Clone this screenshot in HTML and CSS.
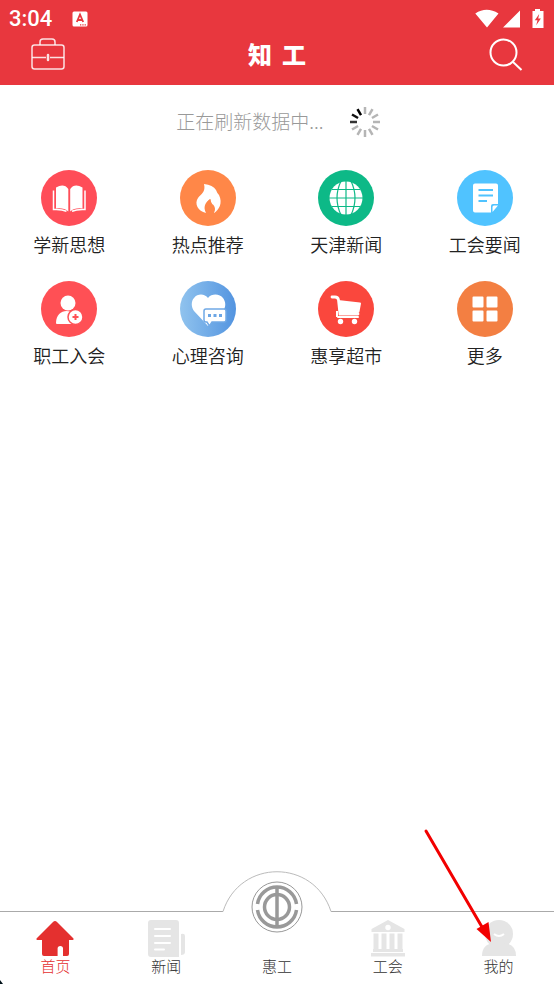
FILE: index.html
```html
<!DOCTYPE html>
<html lang="zh-CN">
<head>
<meta charset="utf-8">
<meta name="viewport" content="width=device-width, initial-scale=1">
<title>知工</title>
<link rel="stylesheet" href="styles.css">
</head>
<body>
<header class="header">
  <div class="status">
    <time class="clock">3:04</time>
    <svg class="notice" width="16" height="16" viewBox="0 0 16 16" aria-hidden="true"><rect x=".5" y=".5" width="15" height="15" rx="1.5" fill="#fff"/><path d="M4.800 11 8 3.500l3.200 7.500M6 9h4" fill="none" stroke="#e8373e" stroke-width="1.800"/><path d="M8 13.800h1.300m1 0h1.300m1 0h1.300" stroke="#e8373e" stroke-width="1.200"/></svg>
    <svg class="signals" width="70" height="20" viewBox="0 0 70 20" fill="#fff" aria-hidden="true"><path d="M.3 4.500Q11.500-3 23.500 4.500L12 18.500ZM28 18.500 45 1.500V18.500Z"/><path d="M57.500 2H60V0h5v2h3.500v17h-11Z"/><path d="m64.200 5-4.400 6.200h2.700l-1.300 5 4.700-6.600h-2.700Z" fill="#e8373e"/></svg>
  </div>
  <div class="bar">
    <button class="icon-button" aria-label="服务"><svg width="36" height="34" viewBox="0 0 36 34" fill="none" stroke="#fff" stroke-opacity=".85" stroke-width="1.500"><rect x="2" y="7" width="32" height="24" rx="2.500"/><path d="M10 7V4q0-3 3-3h9q3 0 3 3v3M2 19.500h14m4 0h14"/><path d="M18 17v5" stroke-width="2.500" stroke-linecap="round"/></svg></button>
    <h1 class="brand"><span>知</span><span>工</span></h1>
    <button class="icon-button" aria-label="搜索"><svg width="36" height="34" viewBox="0 0 36 34" fill="none" stroke="#fff" stroke-width="2"><circle cx="15.500" cy="14.500" r="13"/><path d="m24.500 23.500 9 8.500"/></svg></button>
  </div>
</header>
<main class="content">
  <div class="refresh" role="status">
    <span class="message">正在刷新数据中...</span>
    <svg width="30" height="30" viewBox="-15 -15 30 30" stroke-width="2.500" stroke="#b5b5b5" aria-hidden="true">
      <path d="M0-15v7"/><path d="M0-15v7" transform="rotate(30)"/><path d="M0-15v7" transform="rotate(60)"/><path d="M0-15v7" transform="rotate(90)"/><path d="M0-15v7" transform="rotate(120)"/><path d="M0-15v7" transform="rotate(150)"/><path d="M0-15v7" transform="rotate(180)"/><path d="M0-15v7" transform="rotate(210)"/><path d="M0-15v7" transform="rotate(240)"/><path d="M0-15v7" transform="rotate(270)" stroke="#333"/><path d="M0-15v7" transform="rotate(300)" stroke="#111"/><path d="M0-15v7" transform="rotate(330)" stroke="#000"/>
    </svg>
  </div>
  <nav class="grid" aria-label="服务">
    <a class="entry" href="#study"><svg class="disc" viewBox="0 0 56 56"><circle cx="28" cy="28" r="28" fill="#ff4d58"/><path d="M15 17.500Q23 13 27.300 19v22.500Q23 37.500 15 38.500ZM41.500 17.500Q33.500 13 29.200 19v22.500q4.300-4 12.300-3Z" fill="#fff"/><path d="M12.500 20.500v19q8-.5 13 1.800M44 20.500v19q-8-.5-13 1.800" fill="none" stroke="#fff" stroke-width="1.500"/></svg><span>学新思想</span></a>
    <a class="entry" href="#hot"><svg class="disc" viewBox="0 0 56 56"><circle cx="28" cy="28" r="28" fill="#ff8748"/><path d="M24 14q9 1 12 6 1 3 3 5c4 8 0 15-5 18 1-4 0-6-2-8q-1-3-2-6c-5 4-7 8-4 14C18 41 14 34 18 28c3-4 8-6 6-14Z" fill="#fff"/><path d="M30.500 29q0 4 3 6 3 4 0 8h-6c-4-5-2-11 3-14Z" fill="#ff8748"/></svg><span>热点推荐</span></a>
    <a class="entry" href="#tianjin"><svg class="disc" viewBox="0 0 56 56"><circle cx="28" cy="28" r="28" fill="#0db987"/><circle cx="28" cy="28" r="16.500" fill="#fff"/><path d="M28 11v34M14 19.500h28M11 28h34M14 36.500h28M23 11q-8 17 0 34M33 11q8 17 0 34" fill="none" stroke="#0db987" stroke-width="1.200"/></svg><span>天津新闻</span></a>
    <a class="entry" href="#union-news"><svg class="disc" viewBox="0 0 56 56"><circle cx="28" cy="28" r="28" fill="#50c3ff"/><path d="M18 13.500h21q2 0 2 2V34h-5q-2 0-2 2v6.500H18q-2 0-2-2v-25q0-2 2-2Z" fill="#fff"/><path d="M35.500 42v-5q0-1.500 1.500-1.500h4Z" fill="#fff"/><path d="M21.500 20H36m-14.500 5.500H36M21.500 31H30" stroke="#50c3ff" stroke-width="2"/></svg><span>工会要闻</span></a>
    <a class="entry" href="#join"><svg class="disc" viewBox="0 0 56 56"><circle cx="28" cy="28" r="28" fill="#ff5055"/><circle cx="27" cy="22" r="7.500" fill="#fff"/><path d="M15 42c0-16 20-16 24 0q0 1-1 1H16q-1 0-1-1Z" fill="#fff"/><circle cx="34.500" cy="36" r="7.500" fill="#fff" stroke="#ff5055" stroke-width="1.500"/><path d="M34.500 33v6m-3-3h6" stroke="#ff5055" stroke-width="2"/></svg><span>职工入会</span></a>
    <a class="entry" href="#counsel"><svg class="disc" viewBox="0 0 56 56"><defs><linearGradient id="blue"><stop stop-color="#90c3ee"/><stop offset="1" stop-color="#5394e0"/></linearGradient></defs><circle cx="28" cy="28" r="28" fill="url(#blue)"/><path d="M28 17c4-5 12-4 15 0 3 4 3 9 0 13L28 45 14 30c-3-4-3-10 0-13 4-5 11-4 14 0Z" fill="#fff"/><path d="M26 28h18q2 0 2 2v9q0 2-2 2H32l-2.500 4-2.500-4h-1q-2 0-2-2v-9q0-2 2-2Z" fill="#fff" stroke="#70a9e6" stroke-width="1.500"/><path d="M28 34.500h3m2.500 0h3m2.500 0h3" stroke="#6ca6e5" stroke-width="3"/></svg><span>心理咨询</span></a>
    <a class="entry" href="#market"><svg class="disc" viewBox="0 0 56 56"><circle cx="28" cy="28" r="28" fill="#fa473d"/><path d="M14 16h3q3 0 3.500 3L22 33h18" fill="none" stroke="#fff" stroke-width="2.800" stroke-linecap="round"/><path d="m20 19 22 2.500q1 0 1 1l-1.500 8q0 1.500-2 1.500H21Z" fill="#fff"/><path d="M20 36h20" stroke="#fff" stroke-width="2" stroke-linecap="round"/><path d="M19 30v6" stroke="#fff" stroke-width="2"/><circle cx="22.500" cy="40.500" r="2.700" fill="#fff"/><circle cx="36.500" cy="40.500" r="2.700" fill="#fff"/></svg><span>惠享超市</span></a>
    <a class="entry" href="#more"><svg class="disc" viewBox="0 0 56 56"><circle cx="28" cy="28" r="28" fill="#f37f42"/><path d="M16.500 16.500h9v9h-9Zm14 0h9v9h-9ZM16.500 30.500h9v9h-9ZM30.500 30.500h9v9h-9Z" fill="#fff" stroke="#fff" stroke-width="2" stroke-linejoin="round"/></svg><span>更多</span></a>
  </nav>
</main>
<nav class="tabs" aria-label="主导航">
  <a class="tab active" href="#home" aria-current="page"><svg width="38" height="38" viewBox="0 0 38 38"><path d="M17 2q2-2 4 0l16.500 16.500q.5 1.500-1 1.500H33v14q0 2-2 2H27v-7.500q0-2.500-2.700-2.500t-2.700 2.500V36H8q-2 0-2-2V20H1.500q-1.500 0-1-1.500Z" fill="#e4302f"/></svg><span>首页</span></a>
  <a class="tab" href="#news"><svg width="38" height="38" viewBox="0 0 38 38"><path d="M4 0h25q3 0 3 3v34H4q-3 0-3-3V3q0-3 3-3ZM34 14q4-1 4 2v16q0 3-4 3Z" fill="#e5e5e5"/><path d="M8 9h15M8 16h15M8 23h15M8 29.500h9" stroke="#fff" stroke-width="2" stroke-linecap="round"/></svg><span>新闻</span></a>
  <a class="tab" href="#benefit">
    <svg class="hump" width="110" height="43" viewBox="0 0 110 43" aria-hidden="true"><path d="M1 40.500C18-12.500 92-12.500 109 40.500V43H1Z" fill="#fff"/><path d="M1 40.500C18-12.500 92-12.500 109 40.500" fill="none" stroke="#bbb"/></svg>
    <svg class="emblem" width="52" height="52" viewBox="-26 -26 52 52" fill="none" stroke="#999"><circle r="25" fill="#fff" stroke-width="1"/><path d="M-19.500-3A19.700 19.700 0 0 1 19.500-3M-19.500 3A19.700 19.700 0 0 0 19.500 3" stroke-width="3.500"/><circle r="12.500" stroke-width="3.500"/><path d="M0-20V20" stroke-width="3.500"/></svg>
    <span>惠工</span></a>
  <a class="tab" href="#union"><svg width="38" height="38" viewBox="0 0 38 38"><path d="M19 0 35.500 9v3h-33V9ZM4.500 13.500h5V30h-5Zm8 0h5V30h-5Zm8 0h5V30h-5Zm8 0h5V30h-5ZM4 29h30v3H4ZM2 33h34v3.500H2Z" fill="#e5e5e5"/><circle cx="19" cy="7.500" r="2.700" fill="#fff"/></svg><span>工会</span></a>
  <a class="tab" href="#mine"><svg width="38" height="38" viewBox="0 0 38 38"><circle cx="19" cy="14" r="14" fill="#e5e5e5"/><path d="M2 36q0-12 12-13h10q12 1 12 13Z" fill="#e5e5e5"/><path d="M14 14q5 4 10 0" fill="none" stroke="#fff" stroke-width="2"/></svg><span>我的</span>
    <svg class="pointer" width="70" height="116" viewBox="0 0 70 116" aria-hidden="true"><path d="m3 3 56 96" stroke="#f20000" stroke-width="3" stroke-linecap="round"/><path d="m68 114-14.500-13 12-7Z" fill="#f20000"/></svg></a>
  <svg class="corner" width="3" height="4" viewBox="0 0 3 4" aria-hidden="true"><path d="M0 0 3 4H0Z" fill="#001018"/></svg>
</nav>
</body>
</html>
```
FILE: styles.css
```css
* {
  box-sizing: border-box;
}

body {
  margin: 0;
  min-height: 100vh;
  display: flex;
  flex-direction: column;
  background: #fff;
  color: #222;
  font-family: Roboto, "Noto Sans CJK SC", sans-serif;
}

svg {
  display: block;
}

a {
  color: inherit;
  text-decoration: none;
}

.header {
  background: #e8373e;
  color: #fff;
  padding-bottom: 12px;
}

.status {
  display: flex;
  align-items: center;
  height: 37px;
  padding: 0 9px;
}

.clock {
  font-size: 22px;
  font-weight: 500;
}

.notice {
  margin-left: 20px;
}

.signals {
  margin-left: auto;
}

.bar {
  display: flex;
  justify-content: space-between;
  align-items: center;
  height: 36px;
  padding: 0 30px;
}

.icon-button {
  border: 0;
  padding: 0;
  background: none;
}

.brand {
  display: flex;
  gap: 10px;
  margin: 0;
  padding-bottom: 2px;
  font-family: "Noto Sans CJK SC", sans-serif;
  font-size: 24px;
  line-height: 32px;
  font-weight: 900;
}

.content {
  flex: 1;
}

.refresh {
  display: flex;
  justify-content: center;
  align-items: center;
  gap: 26px;
  height: 74px;
  padding-left: 2px;
  color: #999;
  font-family: "Noto Sans CJK SC", sans-serif;
  font-size: 19px;
  font-weight: 300;
}

.message {
  padding-bottom: 4px;
}

.grid {
  display: grid;
  grid-template-columns: repeat(4, 1fr);
  row-gap: 23px;
  padding-top: 11px;
}

.entry {
  display: flex;
  flex-direction: column;
  align-items: center;
  gap: 8px;
  font-size: 18px;
  font-weight: 350;
  line-height: 24px;
}

.disc {
  width: 56px;
  height: 56px;
}

.tabs {
  position: relative;
  display: grid;
  grid-template-columns: repeat(5, 1fr);
  border-top: 1px solid #aaa;
  height: 73px;
}

.tab {
  position: relative;
  display: flex;
  flex-direction: column;
  justify-content: flex-end;
  align-items: center;
  padding-bottom: 8px;
  color: #333;
  font-size: 15px;
  font-weight: 300;
  line-height: 18px;
}

.active {
  color: #e4302f;
}

.hump {
  position: absolute;
  bottom: 70px;
  left: 50%;
  transform: translateX(-50%);
}

.emblem {
  position: absolute;
  bottom: 51px;
}

.pointer {
  position: absolute;
  right: 61px;
  bottom: 40px;
}

.corner {
  position: absolute;
  left: 0;
  bottom: 0;
}
```
